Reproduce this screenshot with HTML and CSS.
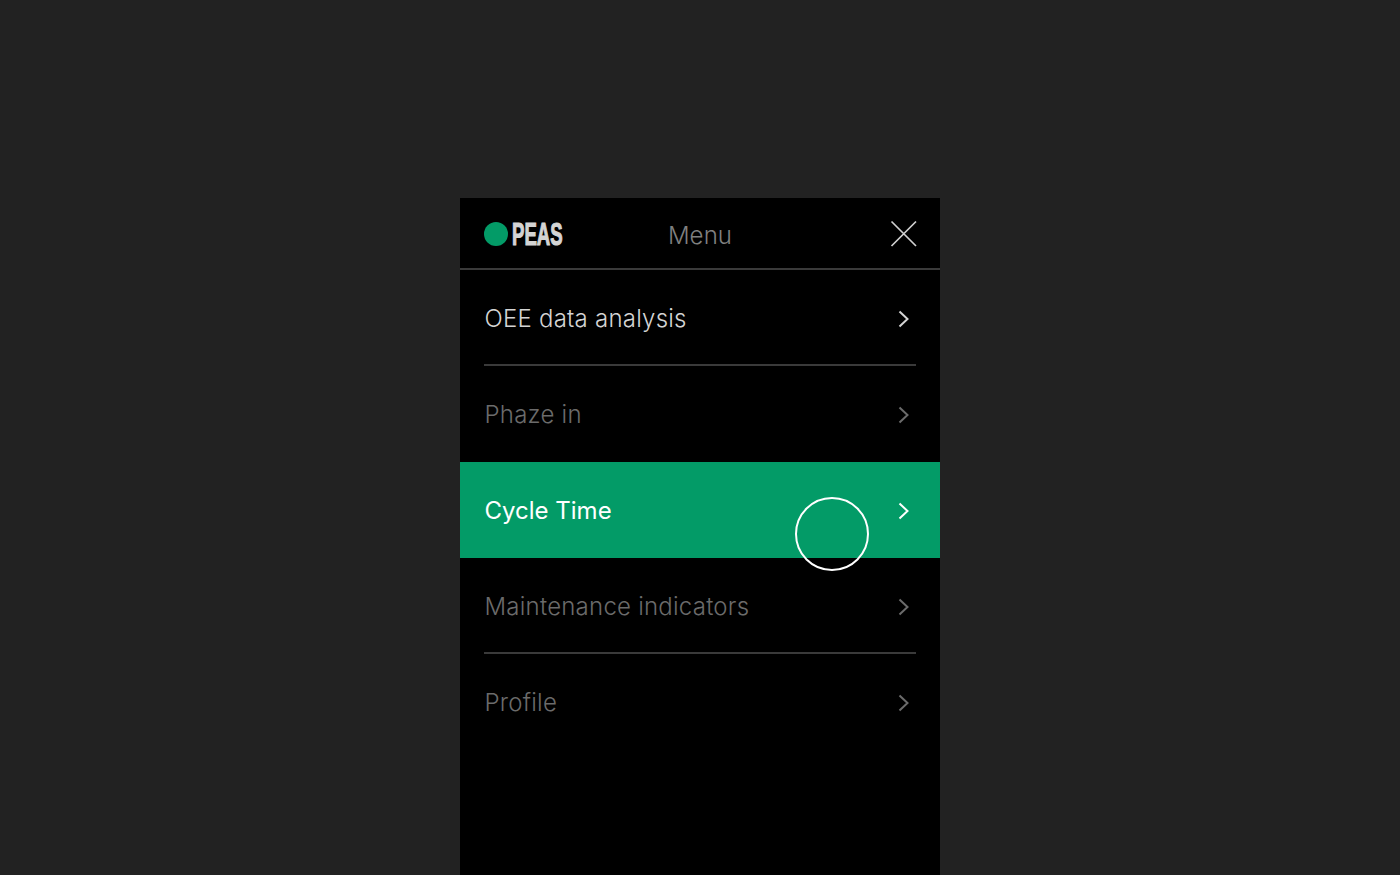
FILE: index.html
```html
<!DOCTYPE html>
<html lang="en">
<head>
  <meta charset="UTF-8" />
  <title>PEAS Menu</title>
  <link rel="stylesheet" href="styles.css">
</head>
<body>
  <div class="panel">
    <div class="header">
      <div class="logo">
        <span class="logo-dot"></span>
        <span class="logo-text">PEAS</span>
      </div>
      <span class="header-title">Menu</span>
      <svg class="close" width="28" height="28" viewBox="0 0 28 28" fill="none">
        <path d="M1.5 1.5L26 26M26 1.5L1.5 26" stroke="#d0d0d0" stroke-width="1.7"/>
      </svg>
    </div>

    <div class="menu">
      <a class="row row-light row-line">
        <span>OEE data analysis</span>
        <svg class="chevron" width="12" height="18" viewBox="0 0 12 18" fill="none"><path d="M1.5 1.5L9.5 9L1.5 16.5" stroke="currentColor" stroke-width="2"/></svg>
      </a>
      <a class="row">
        <span>Phaze in</span>
        <svg class="chevron" width="12" height="18" viewBox="0 0 12 18" fill="none"><path d="M1.5 1.5L9.5 9L1.5 16.5" stroke="currentColor" stroke-width="2"/></svg>
      </a>
      <a class="row row-active">
        <span>Cycle Time</span>
        <svg class="chevron" width="12" height="18" viewBox="0 0 12 18" fill="none"><path d="M1.5 1.5L9.5 9L1.5 16.5" stroke="currentColor" stroke-width="2"/></svg>
        <span class="cursor"></span>
      </a>
      <a class="row row-line">
        <span>Maintenance indicators</span>
        <svg class="chevron" width="12" height="18" viewBox="0 0 12 18" fill="none"><path d="M1.5 1.5L9.5 9L1.5 16.5" stroke="currentColor" stroke-width="2"/></svg>
      </a>
      <a class="row">
        <span>Profile</span>
        <svg class="chevron" width="12" height="18" viewBox="0 0 12 18" fill="none"><path d="M1.5 1.5L9.5 9L1.5 16.5" stroke="currentColor" stroke-width="2"/></svg>
      </a>
    </div>
  </div>
</body>
</html>
```

FILE: styles.css
```css
* {
  box-sizing: border-box;
  margin: 0;
  padding: 0;
}

body {
  height: 100vh;
  padding-top: 198px;
  background: #222222;
  font-family: 'Inter', sans-serif;
  overflow: hidden;
}

.panel {
  width: 480px;
  height: 677px;
  margin: 0 auto;
  background: #000;
}

.header {
  position: relative;
  height: 72px;
  padding: 4px 24px 0;
  display: flex;
  align-items: center;
  justify-content: space-between;
  border-bottom: 2px solid #3a3a3a;
}

.logo {
  display: flex;
  align-items: center;
  gap: 4px;
  margin-top: -2px;
}

.logo-dot {
  width: 24px;
  height: 24px;
  border-radius: 50%;
  background: #039b67;
}

.logo-text {
  width: 52px;
  font-family: 'Liberation Sans', sans-serif;
  font-size: 32px;
  line-height: 32px;
  font-weight: 700;
  color: #d4d4d4;
  -webkit-text-stroke: 1.2px #d4d4d4;
  transform: scaleX(0.58);
  transform-origin: left center;
  white-space: nowrap;
}

.header-title {
  position: absolute;
  left: 0;
  right: 0;
  text-align: center;
  font-size: 24px;
  font-weight: 300;
  letter-spacing: 0.1px;
  color: #808080;
}

.close {
  margin-right: -2px;
  margin-top: -2px;
}

.row {
  position: relative;
  height: 96px;
  padding: 0 30px 0 24.5px;
  display: flex;
  align-items: center;
  justify-content: space-between;
  font-size: 24px;
  font-weight: 300;
  letter-spacing: 0.23px;
  color: #6b6b6b;
}

.row-light {
  color: #d4d4d4;
}

.row-active {
  background: #039b67;
  color: #fff;
  font-weight: 400;
  letter-spacing: 0;
}

.row-line::after {
  content: '';
  position: absolute;
  left: 24px;
  right: 24px;
  bottom: 0;
  height: 2px;
  background: #3a3a3a;
}

.chevron {
  flex: none;
  margin-top: 1px;
}

.cursor {
  position: absolute;
  left: 335px;
  top: 35px;
  width: 74px;
  height: 74px;
  border: 2px solid #fff;
  border-radius: 50%;
}
```
